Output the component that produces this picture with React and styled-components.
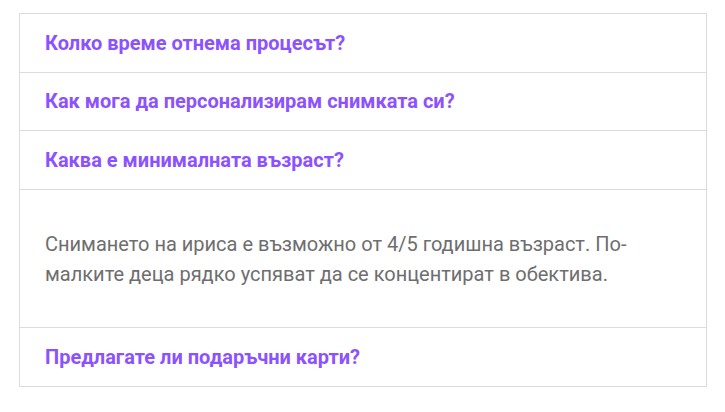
import styled, { createGlobalStyle } from 'styled-components';

const GlobalStyle = createGlobalStyle`
    html, body {
        margin: 0;
        padding: 0;
        background: #ffffff;
    }
`;

const Page = styled.div`
    padding: 13px 18px 0 19px;
    font-family: Roboto, "Noto Sans", sans-serif;
`;

const Accordion = styled.div`
    border: 1px solid #dcdcdc;
`;

const Item = styled.div`
    border-top: ${(props) => (props.first ? 'none' : '1px solid #dcdcdc')};
`;

const Question = styled.div`
    height: 57.67px;
    display: flex;
    align-items: center;
    padding: 0 25px;
    font-size: 20px;
    font-weight: 700;
    color: #8c52ff;
    cursor: pointer;
`;

const Answer = styled.div`
    border-top: 1px solid #dcdcdc;
    padding: 39px 25px 38px;
    font-size: 20px;
    line-height: 30px;
    color: #6e6e6e;
`;

const faq = [
    { q: 'Колко време отнема процесът?' },
    { q: 'Как мога да персонализирам снимката си?' },
    {
        q: 'Каква е минималната възраст?',
        a: 'Снимането на ириса е възможно от 4/5 годишна възраст. По-малките деца рядко успяват да се концентират в обектива.',
    },
    { q: 'Предлагате ли подаръчни карти?' },
];

const App = () => {
    return (
        <Page>
            <GlobalStyle />
            <Accordion>
                {faq.map((item, i) => (
                    <Item key={i} first={i === 0}>
                        <Question>{item.q}</Question>
                        {item.a && <Answer>{item.a}</Answer>}
                    </Item>
                ))}
            </Accordion>
        </Page>
    );
};

export default App;
